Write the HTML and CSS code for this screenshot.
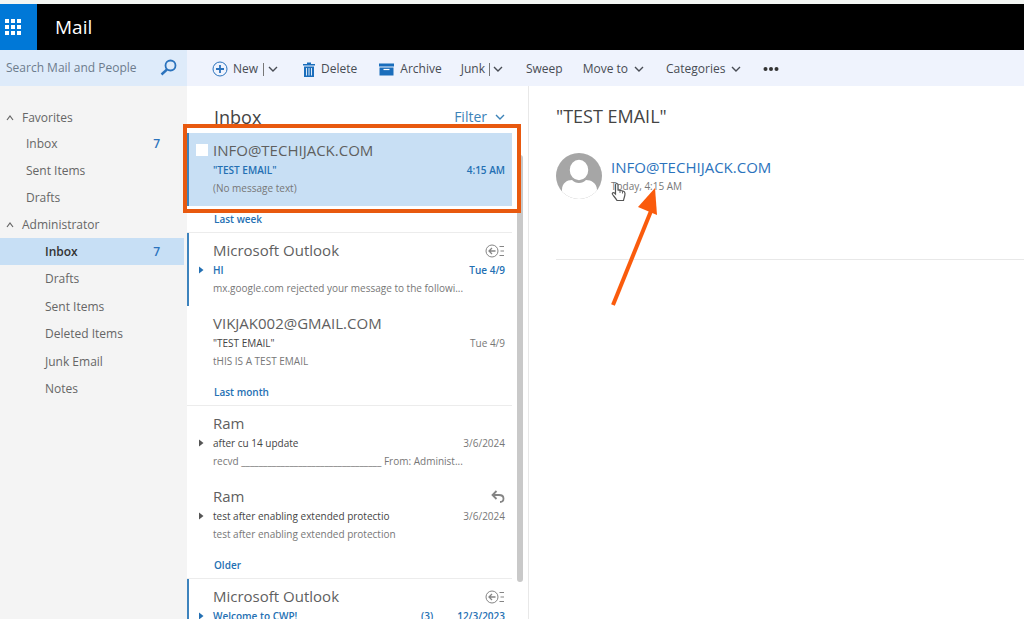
FILE: index.html
```html
<!DOCTYPE html>
<html lang="en">
<head>
<meta charset="utf-8">
<title>Mail</title>
<link rel="stylesheet" href="styles.css">
</head>
<body>
<svg class="defs" aria-hidden="true">
  <symbol id="chevron" viewBox="0 0 10 8"><path d="M1 2l4 4 4-4" fill="none" stroke="currentColor" stroke-width="1.4"/></symbol>
  <symbol id="caret-up" viewBox="0 0 8 8"><path d="M1 6l3-4 3 4" fill="none" stroke="currentColor" stroke-width="1.2"/></symbol>
  <symbol id="expand" viewBox="0 0 5 8"><path d="M0 0.500L4.500 4 0 7.500z" fill="currentColor"/></symbol>
  <symbol id="bounce" viewBox="0 0 20 14"><g fill="none" stroke="currentColor"><circle cx="7" cy="7" r="6"/><path d="M10.500 7H4M7 4L4 7l3 3" stroke-width="1.300"/><path d="M14.500 2.500H19M15.500 7H19M14.500 11.500H19" stroke-width="1.200"/></g></symbol>
</svg>
<div class="app">
  <header class="topbar">
    <button class="waffle" aria-label="App launcher">
      <svg width="17" height="17" viewBox="0 0 17 17" fill="#fff"><path d="M0 0h4v4H0zM6 0h4v4H6zM12 0h4v4h-4zM0 6h4v4H0zM6 6h4v4H6zM12 6h4v4h-4zM0 12h4v4H0zM6 12h4v4H6zM12 12h4v4h-4z"/></svg>
    </button>
    <h1 class="brand">Mail</h1>
  </header>

  <div class="commandbar">
    <form class="search">
      <input class="search-input" type="search" aria-label="Search Mail and People" placeholder="Search Mail and People">
      <button class="search-button" type="button" aria-label="Search">
        <svg width="18" height="18" viewBox="0 0 18 18" fill="none" stroke="#2b73bd"><circle cx="10.500" cy="6.500" r="5" stroke-width="1.800"/><path d="M7 10.500L1.500 15.500" stroke-width="2.400"/></svg>
      </button>
    </form>
    <nav class="commands" aria-label="Commands">
      <button class="command command-new">
        <svg width="16" height="16" viewBox="0 0 16 16" fill="none" stroke="#2b73bd"><circle cx="8" cy="8" r="7"/><path d="M8 4v8M4 8h8" stroke-width="1.800"/></svg>
        <span>New</span><span class="split"></span><svg class="chevron"><use href="#chevron"/></svg>
      </button>
      <button class="command command-delete">
        <svg width="12" height="15" viewBox="0 0 12 15"><path d="M0 2h4V0.500h4V2h4v1.500H0zM1 4.500h10V15H1z" fill="#1b6ebc"/><path d="M3.500 6v7.500M6 6v7.500M8.500 6v7.500" stroke="#dce9f8"/></svg>
        <span>Delete</span>
      </button>
      <button class="command command-archive">
        <svg width="15" height="13" viewBox="0 0 15 13" fill="#1b6ebc"><path d="M0 0.500h15v3H0zM0.500 4.500h14v8H0.500z"/><path d="M4.500 6.500h6" stroke="#fff" stroke-width="1.200"/></svg>
        <span>Archive</span>
      </button>
      <button class="command command-junk"><span>Junk</span><span class="split"></span><svg class="chevron"><use href="#chevron"/></svg></button>
      <button class="command command-sweep">Sweep</button>
      <button class="command command-move"><span>Move to</span><svg class="chevron"><use href="#chevron"/></svg></button>
      <button class="command command-categories"><span>Categories</span><svg class="chevron"><use href="#chevron"/></svg></button>
      <button class="command" aria-label="More commands"><svg width="16" height="6" viewBox="0 0 16 6" fill="#333"><circle cx="2.500" cy="3" r="2"/><circle cx="8" cy="3" r="2"/><circle cx="13.500" cy="3" r="2"/></svg></button>
    </nav>
  </div>

  <div class="workspace">
    <nav class="folders" aria-label="Folders">
      <button class="folder-group"><svg class="caret"><use href="#caret-up"/></svg>Favorites</button>
      <ul class="folder-list favorites">
        <li><a class="folder" href="#inbox">Inbox<span class="count">7</span></a></li>
        <li><a class="folder" href="#sent">Sent Items</a></li>
        <li><a class="folder" href="#drafts">Drafts</a></li>
      </ul>
      <button class="folder-group"><svg class="caret"><use href="#caret-up"/></svg>Administrator</button>
      <ul class="folder-list mailbox">
        <li><a class="folder current" href="#inbox" aria-current="page">Inbox<span class="count">7</span></a></li>
        <li><a class="folder" href="#drafts">Drafts</a></li>
        <li><a class="folder" href="#sent">Sent Items</a></li>
        <li><a class="folder" href="#deleted">Deleted Items</a></li>
        <li><a class="folder" href="#junk">Junk Email</a></li>
        <li><a class="folder" href="#notes">Notes</a></li>
      </ul>
    </nav>

    <section class="list-pane">
      <div class="list-content">
        <div class="list-header">
          <h2 class="list-title">Inbox</h2>
          <button class="filter">Filter<svg class="chevron"><use href="#chevron"/></svg></button>
        </div>
        <article class="message unread selected">
          <input class="pick" type="checkbox" aria-label="Select message">
          <div class="line"><h3 class="sender">INFO@TECHIJACK.COM</h3></div>
          <div class="line subject-line"><span class="subject">"TEST EMAIL"</span><time class="date">4:15 AM</time></div>
          <p class="preview">(No message text)</p>
          <div class="highlight-box"></div>
        </article>
        <h3 class="period">Last week</h3>
        <article class="message unread ruled">
          <svg class="expand"><use href="#expand"/></svg>
          <div class="line"><h3 class="sender">Microsoft Outlook</h3><svg class="status"><use href="#bounce"/></svg></div>
          <div class="line subject-line"><span class="subject">HI</span><time class="date">Tue 4/9</time></div>
          <p class="preview">mx.google.com rejected your message to the followi...</p>
        </article>
        <article class="message">
          <div class="line"><h3 class="sender">VIKJAK002@GMAIL.COM</h3></div>
          <div class="line subject-line"><span class="subject">"TEST EMAIL"</span><time class="date">Tue 4/9</time></div>
          <p class="preview">tHIS IS A TEST EMAIL</p>
        </article>
        <h3 class="period">Last month</h3>
        <article class="message ruled">
          <svg class="expand"><use href="#expand"/></svg>
          <div class="line"><h3 class="sender">Ram</h3></div>
          <div class="line subject-line"><span class="subject">after cu 14 update</span><time class="date">3/6/2024</time></div>
          <p class="preview">recvd ________________________________ From: Administ...</p>
        </article>
        <article class="message">
          <svg class="expand"><use href="#expand"/></svg>
          <div class="line"><h3 class="sender">Ram</h3><svg width="14" height="13" viewBox="0 0 14 13" fill="none" stroke="#858585" stroke-width="1.800"><path d="M5.500 1L1.500 5l4 4M2 5h6c3 0 4.500 1.500 4.500 3.500S11 12 9 12"/></svg></div>
          <div class="line subject-line"><span class="subject">test after enabling extended protectio</span><time class="date">3/6/2024</time></div>
          <p class="preview">test after enabling extended protection</p>
        </article>
        <h3 class="period">Older</h3>
        <article class="message unread ruled">
          <svg class="expand"><use href="#expand"/></svg>
          <div class="line"><h3 class="sender">Microsoft Outlook</h3><svg class="status"><use href="#bounce"/></svg></div>
          <div class="line subject-line"><span class="subject">Welcome to CWP!</span><span class="thread-count">(3)</span><time class="date">12/3/2023</time></div>
        </article>
      </div>
      <div class="scroll-track"><div class="scroll-thumb"></div></div>
    </section>

    <main class="reading">
      <h2 class="reading-subject">"TEST EMAIL"</h2>
      <div class="from">
        <svg class="avatar" viewBox="0 0 46 46"><defs><clipPath id="disc"><circle cx="23" cy="23" r="23"/></clipPath></defs><g clip-path="url(#disc)"><path d="M0 0h46v46H0z" fill="#a6a6a6"/><path d="M6 46V37c0-7 5-10 10-10 2 2 4 3 7 3s5-1 7-3c5 0 11 3 11 10v9z" fill="#fff"/><ellipse cx="23" cy="17" rx="10" ry="11" fill="#fff" stroke="#a6a6a6" stroke-width="1.500"/></g></svg>
        <div>
          <a class="from-name" href="#contact">INFO@TECHIJACK.COM</a>
          <time class="from-date">Today, 4:15 AM</time>
        </div>
        <svg class="cursor" viewBox="0 0 17 20"><path d="M4.500 12V3c0-2 2.500-2 2.500 0v5l5 1c1.500.3 2 1 2 2.500 0 3-1 4-1.500 7H6c-1-2-3-4-4.500-6-.8-1.500 1-2.500 2-1.500z" fill="#fff" stroke="#555" stroke-width="1.200"/><path d="M9 8.500v2.500M11.500 9v2.500" stroke="#666"/></svg>
        <svg class="arrow" viewBox="0 0 50 122"><path d="M3 118L41 24" stroke="#fa5b0c" stroke-width="4"/><path d="M45 1L28 20l19 8z" fill="#fa5b0c"/></svg>
      </div>
    </main>
  </div>
</div>
</body>
</html>
```
FILE: styles.css
```css
* { box-sizing: border-box; }
body { margin: 0; color: #666; font: 12px/18px "Open Sans", "Noto Sans", sans-serif; }
h1, h2, h3, p, ul { margin: 0; padding: 0; font-weight: 400; list-style: none; }
button, input { font: inherit; color: inherit; border: 0; padding: 0; background: none; }
a { color: inherit; text-decoration: none; }
svg { flex: none; display: block; }
.defs { position: absolute; width: 0; height: 0; }
.app { display: flex; flex-direction: column; height: 100vh; overflow: hidden; border-top: 4px solid #f3f6f3; background: #fff; }

.topbar { display: flex; flex: none; height: 46px; background: #000; }
.waffle { display: flex; align-items: center; width: 37px; padding-left: 5px; background: #0078d7; }
.brand { padding-left: 18px; color: #fff; font-size: 19px; line-height: 46px; }

.commandbar { display: flex; flex: none; height: 36px; background: #eff3fd; }
.search { display: flex; flex: none; align-items: center; width: 187px; padding: 0 9px 0 6px; background: #deebfa; }
.search-input { flex: 1; min-width: 0; outline: 0; }
.search-input::placeholder { color: #6d7c8d; opacity: 1; }
.commands { display: flex; align-items: center; padding: 2px 0 0 25px; }
.command { display: flex; align-items: center; gap: 6px; color: #484c54; white-space: nowrap; }
.chevron { width: 10px; height: 8px; }
.split { width: 1px; height: 13px; background: #777; }
.command-new { gap: 5px; margin-right: 25px; }
.command-new .split, .command-junk .split { margin-right: -1px; }
.command-delete { margin-right: 22px; }
.command-archive { margin-right: 19px; }
.command-junk { gap: 4px; margin-right: 23px; }
.command-sweep { margin-right: 20px; }
.command-move, .command-categories { margin-right: 22px; }

.workspace { display: flex; flex: 1; min-height: 0; }
.folders { flex: none; width: 187px; padding: 19px 3px 0 0; background: #f4f4f4; }
.folder-group { display: flex; align-items: center; gap: 8px; width: 100%; height: 27px; padding-left: 6px; }
.folder-group:first-child { height: 25px; }
.caret { width: 8px; height: 8px; }
.folder { display: flex; justify-content: space-between; align-items: center; height: 27px; padding-right: 24px; }
.favorites .folder { padding-left: 26px; }
.mailbox { display: flex; flex-direction: column; justify-content: space-between; height: 165px; }
.mailbox .folder { padding-left: 45px; }
.count { color: #2b73bd; font-weight: 600; }
.current { background: #c7dff5; color: #333; font-weight: 600; }

.list-pane { display: flex; flex: none; width: 342px; border-right: 1px solid #e8e8e8; }
.list-content { flex: 1; min-width: 0; }
.list-header { display: flex; justify-content: space-between; align-items: center; height: 47px; padding: 14px 7px 0 27px; }
.list-title { color: #444; font-size: 18px; }
.filter { display: flex; align-items: center; gap: 8px; color: #3c83b8; font-size: 14px; }
.message { position: relative; height: 73px; padding: 7px 7px 0 24px; border-left: 2px solid transparent; font-size: 10px; }
.message.unread { border-left-color: #3d83bd; }
.ruled { box-shadow: 0 -1px #ececec; }
.selected { background: #c8dff4; }
.line { display: flex; justify-content: space-between; align-items: center; gap: 8px; white-space: nowrap; }
.sender { color: #5f5f5f; font-size: 15px; line-height: 21px; }
.subject { flex: 1; color: #444; }
.date, .preview { color: #777; white-space: nowrap; }
.unread .subject-line, .unread .subject, .unread .date { color: #2470b3; font-weight: 600; }
.thread-count { margin-right: 16px; }
.status { width: 20px; height: 14px; color: #858585; }
.expand { position: absolute; left: 10px; top: 33px; width: 5px; height: 8px; color: #555; }
.unread .expand { color: #2470b3; }
.pick { position: absolute; left: 7px; top: 11px; width: 12px; height: 12px; margin: 0; appearance: none; background: #fff; }
.highlight-box { position: absolute; inset: -9px -9px -7px -6px; border: 4px solid #e8590f; z-index: 2; pointer-events: none; }
.period { height: 27px; padding-left: 27px; color: #2470b3; font-size: 10px; line-height: 27px; font-weight: 600; }
.scroll-track { flex: none; width: 16px; padding: 69px 5px 0; }
.scroll-thumb { height: 92%; border-radius: 3px; background: #c9c9c9; }

.reading { flex: 1; min-width: 0; padding: 17px 0 0 27px; }
.reading-subject { color: #444; font-size: 18px; line-height: 26px; }
.from { position: relative; display: flex; gap: 9px; height: 131px; padding-top: 24px; border-bottom: 1px solid #e8e8e8; }
.avatar { width: 46px; height: 46px; }
.from-name { display: block; padding-top: 4px; color: #2b73bd; font-size: 15px; line-height: 21px; }
.from-date { display: block; color: #777; font-size: 10px; line-height: 16px; }
.cursor { position: absolute; left: 55px; top: 53px; width: 17px; height: 20px; }
.arrow { position: absolute; left: 54px; top: 58px; width: 50px; height: 122px; }
```
